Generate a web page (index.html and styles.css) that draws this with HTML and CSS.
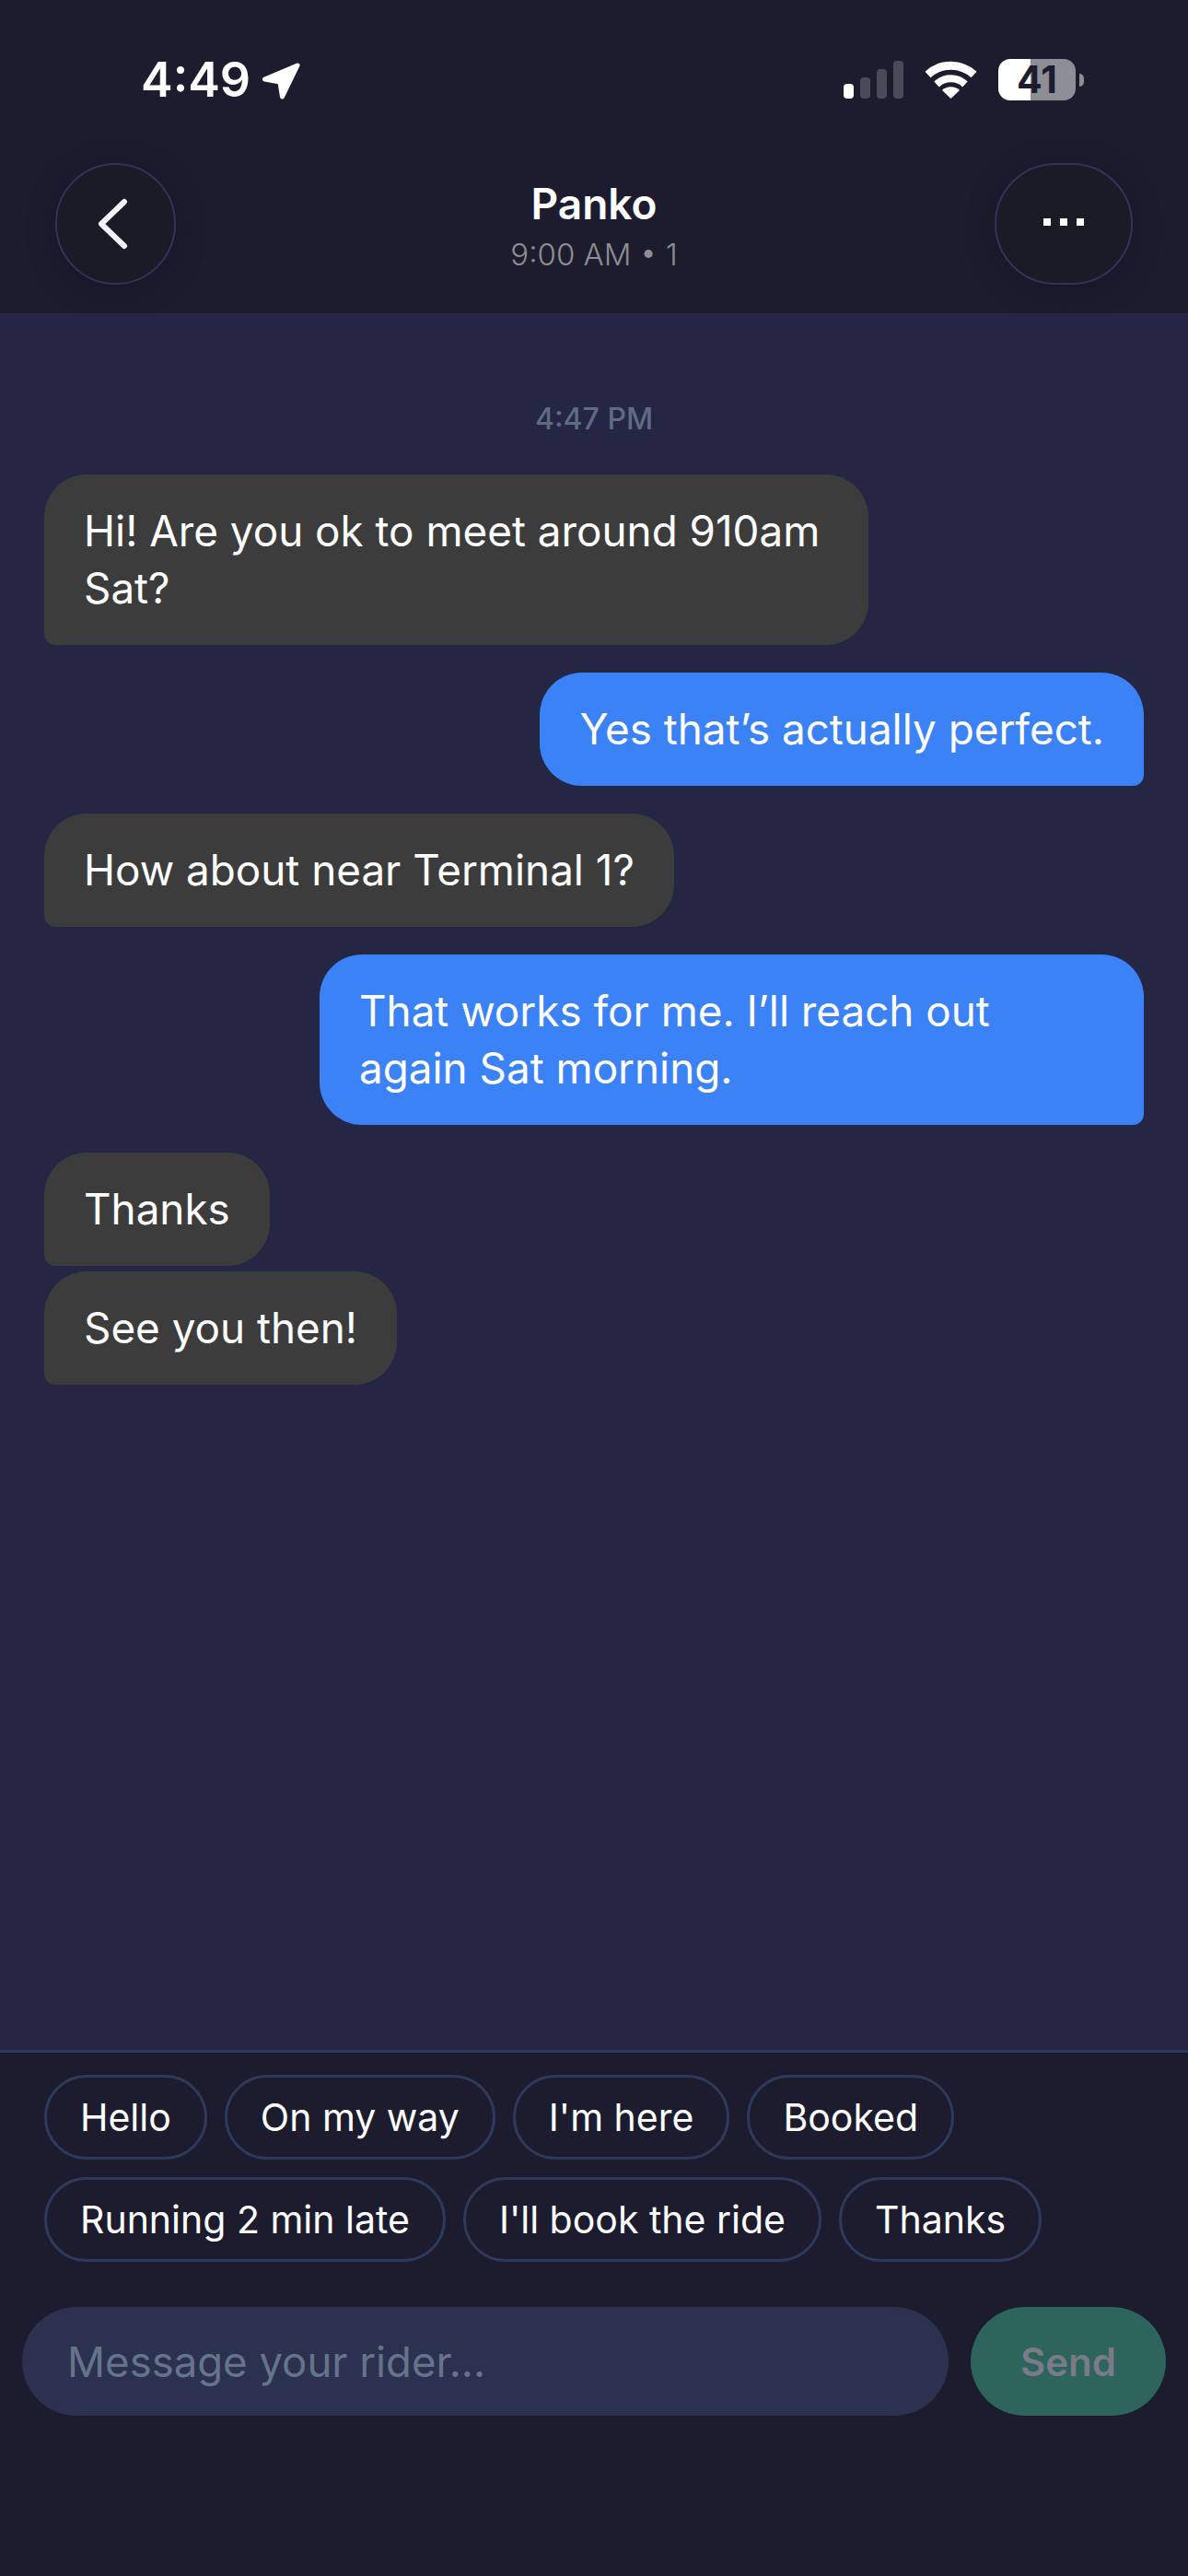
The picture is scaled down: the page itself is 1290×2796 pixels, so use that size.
FILE: index.html
```html
<!DOCTYPE html>
<html lang="en">
<head>
<meta charset="UTF-8">
<meta name="viewport" content="width=device-width, initial-scale=1.0">
<title>Chat with Panko</title>
<link rel="stylesheet" href="styles.css">
</head>
<body>

<div id="app">
    <div id="header">
        <div class="status-bar">
            <div class="status-time">
                <span>4:49</span>
                <svg class="location-icon" width="42" height="40" viewBox="0 0 42 40">
                    <path d="M39 3 L3.5 18 L20 21 L22.5 37 Z" fill="#fff" stroke="#fff" stroke-width="5" stroke-linejoin="round"/>
                </svg>
            </div>
            <div class="status-icons">
                <div class="signal">
                    <span class="bar bar-1 on"></span>
                    <span class="bar bar-2"></span>
                    <span class="bar bar-3"></span>
                    <span class="bar bar-4"></span>
                </div>
                <svg class="wifi-icon" width="57" height="41" viewBox="0 0 57 41">
                    <path d="M3.5 15 A 37 37 0 0 1 53.5 15" fill="none" stroke="#fff" stroke-width="9"/>
                    <path d="M13 25.5 A 22.5 22.5 0 0 1 44 25.5" fill="none" stroke="#fff" stroke-width="8"/>
                    <path d="M19 32 A 14 14 0 0 1 38 32 L28.5 41 Z" fill="#fff"/>
                </svg>
                <div class="battery">
                    <div class="battery-body"><span>41</span></div>
                    <div class="battery-nub"></div>
                </div>
            </div>
        </div>
        <div class="nav-bar">
            <button class="nav-btn back-btn">
                <svg width="36" height="58" viewBox="0 0 36 58">
                    <path d="M31 5 L6 29 L31 53" fill="none" stroke="#f1f1ff" stroke-width="6" stroke-linecap="round" stroke-linejoin="round"/>
                </svg>
            </button>
            <div class="nav-title">
                <div class="rider-name">Panko</div>
                <div class="ride-info">9:00 AM • 1</div>
            </div>
            <button class="nav-btn more-btn">
                <span class="dot"></span>
                <span class="dot"></span>
                <span class="dot"></span>
            </button>
        </div>
    </div>

    <div id="chat">
        <div class="chat-time">4:47 PM</div>
        <div class="msg them">Hi! Are you ok to meet around 910am Sat?</div>
        <div class="msg me">Yes that’s actually perfect.</div>
        <div class="msg them">How about near Terminal 1?</div>
        <div class="msg me">That works for me. I’ll reach out again Sat morning.</div>
        <div class="msg them">Thanks</div>
        <div class="msg them next">See you then!</div>
    </div>

    <div id="footer">
        <div class="chips">
            <button class="chip">Hello</button>
            <button class="chip">On my way</button>
            <button class="chip">I'm here</button>
            <button class="chip">Booked</button>
            <button class="chip">Running 2 min late</button>
            <button class="chip">I'll book the ride</button>
            <button class="chip">Thanks</button>
        </div>
        <div class="composer">
            <input type="text" id="message-input" placeholder="Message your rider...">
            <button id="send-btn">Send</button>
        </div>
    </div>
</div>

</body>
</html>
```

FILE: styles.css
```css
* {
    box-sizing: border-box;
}
body {
    margin: 0;
    background-color: #1c1c2e;
    font-family: Inter, "Liberation Sans", sans-serif;
    color: #fff;
}
button, input {
    font-family: inherit;
}
#app {
    width: 1290px;
    height: 2796px;
    display: flex;
    flex-direction: column;
}

/* top */
#header {
    height: 340px;
    background-color: #1c1c2e;
}
.status-bar {
    height: 177px;
    padding: 62px 113px 0 153px;
    display: flex;
    justify-content: space-between;
    align-items: flex-start;
}
.status-time {
    display: flex;
    align-items: center;
    gap: 12px;
    font-size: 52px;
    font-weight: 600;
    line-height: 50px;
}
.location-icon {
    margin-top: 2px;
}
.status-icons {
    display: flex;
    align-items: flex-end;
    padding-top: 2px;
}
.signal {
    display: flex;
    align-items: flex-end;
    gap: 7px;
    height: 43px;
    margin-right: 23px;
    margin-bottom: 2px;
}
.bar {
    width: 11px;
    border-radius: 4px;
    background-color: #4a4a58;
}
.bar.on {
    background-color: #fff;
}
.bar-1 { height: 16px; }
.bar-2 { height: 23px; }
.bar-3 { height: 32px; }
.bar-4 { height: 41px; }
.wifi-icon {
    margin-right: 23px;
    margin-bottom: 2px;
}
.battery {
    display: flex;
    align-items: center;
    gap: 4px;
}
.battery-body {
    width: 84px;
    height: 45px;
    border-radius: 13px;
    background: linear-gradient(90deg, #fff 0 35px, #8e8e96 35px);
    color: #1c1c2e;
    font-size: 41px;
    font-weight: 700;
    line-height: 45px;
    text-align: center;
}
.battery-nub {
    width: 5px;
    height: 14px;
    border-radius: 0 5px 5px 0;
    background-color: #8e8e96;
}
.nav-bar {
    padding: 0 60px;
    display: grid;
    grid-template-columns: 1fr auto 1fr;
    align-items: start;
}
.nav-btn {
    height: 132px;
    padding: 0;
    border: 2px solid #32325a;
    border-radius: 66px;
    background-color: #1a1b26;
    box-shadow: 0 6px 28px rgba(20, 20, 36, 0.6);
    display: flex;
    align-items: center;
    justify-content: center;
    cursor: pointer;
}
.back-btn {
    width: 131px;
    padding-right: 8px;
    justify-self: start;
}
.more-btn {
    width: 150px;
    gap: 10px;
    padding-bottom: 4px;
    justify-self: end;
}
.dot {
    width: 8px;
    height: 8px;
    background-color: #fff;
}
.nav-title {
    padding-top: 19px;
    text-align: center;
}
.rider-name {
    font-size: 46px;
    font-weight: 600;
    line-height: 50px;
}
.ride-info {
    margin-top: 10px;
    font-size: 33px;
    font-weight: 350;
    line-height: 40px;
    color: #8e8e93;
}

/* messages */
#chat {
    flex: 1;
    padding: 95px 48px 0;
    background-color: #242644;
    display: flex;
    flex-direction: column;
    align-items: flex-start;
}
.chat-time {
    align-self: center;
    margin-bottom: 40px;
    font-size: 32px;
    font-weight: 500;
    line-height: 40px;
    color: #5f6b82;
}
.msg {
    max-width: 895px;
    padding: 30.5px 43px;
    margin-bottom: 30px;
    font-size: 45.8px;
    font-weight: 380;
    line-height: 62px;
}
.msg.them {
    background-color: #3c3c3c;
    border-radius: 46px 46px 46px 12px;
}
.msg.me {
    align-self: flex-end;
    background-color: #3b82f6;
    border-radius: 46px 46px 12px 46px;
}
.msg.next {
    margin-top: -24px;
}

/* bottom */
#footer {
    height: 571px;
    border-top: 3px solid #2d3a5c;
    background-color: #1c1c2e;
}
.chips {
    padding: 24px 48px 0;
    display: flex;
    flex-wrap: wrap;
    gap: 19px;
    width: 1240px;
}
.chip {
    height: 92px;
    padding: 0 36px;
    border: 3px solid #2d3a5c;
    border-radius: 46px;
    background: none;
    color: #fff;
    font-size: 41px;
    font-weight: 380;
    cursor: pointer;
}
.composer {
    margin-top: 49px;
    padding: 0 24px;
    display: flex;
    gap: 24px;
}
#message-input {
    flex: 1;
    height: 118px;
    padding: 0 49px;
    border: none;
    border-radius: 59px;
    background-color: #2d3150;
    color: #fff;
    font-size: 45.5px;
    font-weight: 380;
}
#message-input::placeholder {
    color: #64748b;
    opacity: 1;
}
#send-btn {
    width: 212px;
    height: 118px;
    border: none;
    border-radius: 59px;
    background-color: #2d645c;
    color: #7a7a88;
    font-size: 42px;
    font-weight: 600;
    cursor: pointer;
}
```
